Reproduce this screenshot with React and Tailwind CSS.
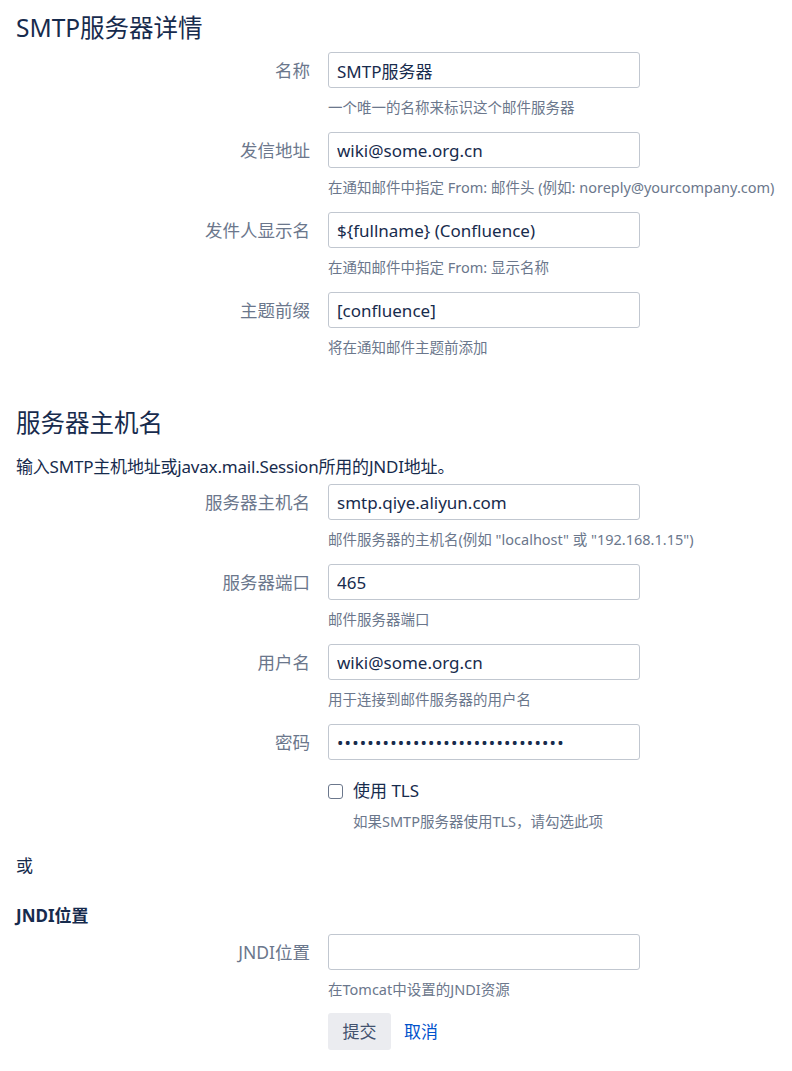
import React from 'react';

const detailFields = [
  { label: '名称', value: 'SMTP服务器', help: '一个唯一的名称来标识这个邮件服务器' },
  { label: '发信地址', value: 'wiki@some.org.cn', help: '在通知邮件中指定 From: 邮件头 (例如: noreply@yourcompany.com)' },
  { label: '发件人显示名', value: '${fullname} (Confluence)', help: '在通知邮件中指定 From: 显示名称' },
  { label: '主题前缀', value: '[confluence]', help: '将在通知邮件主题前添加' },
];

const hostFields = [
  { label: '服务器主机名', value: 'smtp.qiye.aliyun.com', help: '邮件服务器的主机名(例如 "localhost" 或 "192.168.1.15")' },
  { label: '服务器端口', value: '465', help: '邮件服务器端口' },
  { label: '用户名', value: 'wiki@some.org.cn', help: '用于连接到邮件服务器的用户名' },
];

const inputCls =
  'w-[312px] h-[36px] px-[8px] border border-[#c1c7d0] rounded-[3px] text-[17px] text-[#172b4d] bg-white outline-none';

const Field = ({ label, value, help }) => (
  <div className="flex items-start mb-[15px]">
    <label className="w-[294px] shrink-0 text-right text-[17.5px] leading-[36px] text-[#6b778c]">{label}</label>
    <div className="ml-[18px]">
      <input type="text" readOnly defaultValue={value} className={inputCls} />
      {help && <p className="mt-[9px] whitespace-nowrap text-[14.5px] leading-[20px] text-[#6b778c]">{help}</p>}
    </div>
  </div>
);

export default function App() {
  return (
    <div className="min-h-screen bg-white px-[16px] pt-[12px] text-[#172b4d] font-['Noto_Sans','Noto_Sans_CJK_SC',sans-serif]">
      {/* SMTP details */}
      <h2 className="text-[24.5px] leading-[32px] font-normal mb-[8px]">SMTP服务器详情</h2>
      {detailFields.map((f) => (
        <Field key={f.label} {...f} />
      ))}

      {/* Host section */}
      <h2 className="mt-[50px] text-[24.5px] leading-[32px] font-normal">服务器主机名</h2>
      <p className="mt-[16px] mb-[5px] text-[17px] leading-[24px] tracking-[-0.2px]">输入SMTP主机地址或javax.mail.Session所用的JNDI地址。</p>
      {hostFields.map((f) => (
        <Field key={f.label} {...f} />
      ))}
      <div className="flex items-start">
        <label className="w-[294px] shrink-0 text-right text-[17.5px] leading-[36px] text-[#6b778c]">密码</label>
        <div className="ml-[18px]">
          <input
            type="password"
            readOnly
            defaultValue="123456789012345678901234567890"
            className={`${inputCls} tracking-[1.2px]`}
          />
        </div>
      </div>
      <div className="ml-[312px] mt-[19px]">
        <label className="flex items-center h-[24px] text-[17px] text-[#172b4d]">
          <span className="w-[15px] h-[15px] border border-[#6b778c] rounded-[3px] bg-white" />
          <span className="ml-[10px]">使用 TLS</span>
        </label>
        <p className="ml-[25px] mt-[8px] whitespace-nowrap text-[14.5px] leading-[20px] text-[#6b778c]">如果SMTP服务器使用TLS，请勾选此项</p>
      </div>

      <p className="mt-[23px] text-[17px] leading-[24px]">或</p>

      {/* JNDI */}
      <h3 className="mt-[26px] mb-[6px] text-[17px] leading-[24px] font-bold">JNDI位置</h3>
      <Field label="JNDI位置" value="" help="在Tomcat中设置的JNDI资源" />
      <div className="ml-[312px] -mt-[1px] flex items-center gap-[13px]">
        <button className="h-[37px] px-[14.5px] rounded-[3px] bg-[#ebecf0] text-[17px] text-[#42526e]">提交</button>
        <a className="text-[17px] text-[#0052cc]">取消</a>
      </div>
    </div>
  );
}
